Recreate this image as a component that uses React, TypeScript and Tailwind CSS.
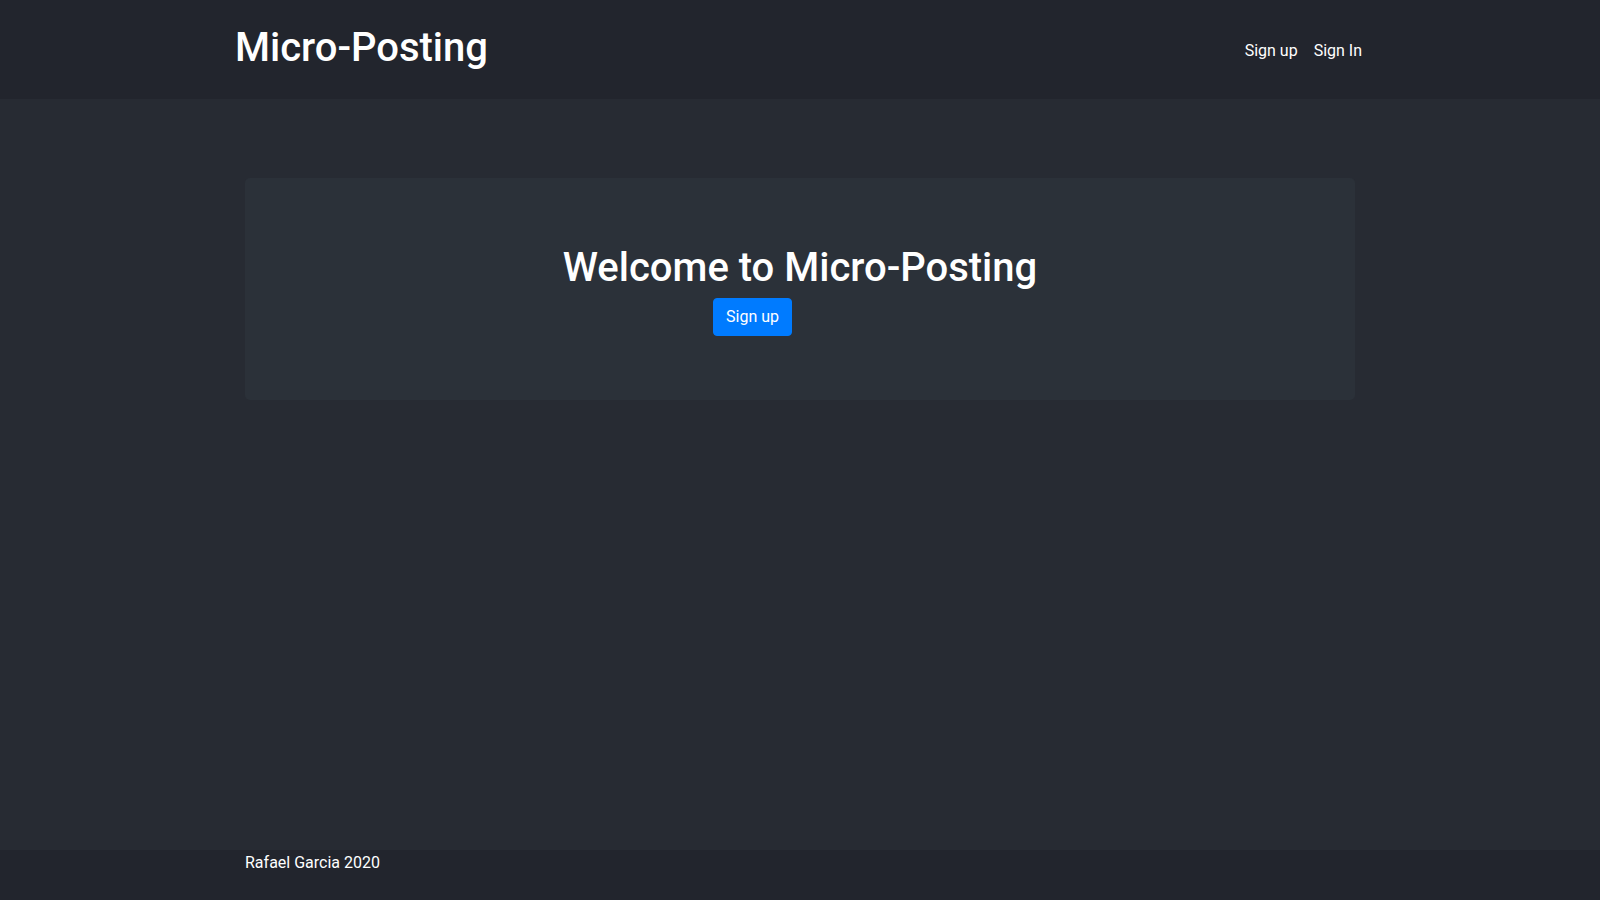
import React from "react";

export default function App() {
  return (
    <div
      className="min-h-screen flex flex-col bg-[#272b33] text-white"
      style={{ fontFamily: "Roboto, 'Liberation Sans', sans-serif" }}
    >
      <header className="bg-[#22252d] h-[99px]">
        <div className="w-[1140px] mx-auto h-full flex items-center justify-between">
          <a className="text-[40px] leading-[1.2] font-medium pl-[5px] -mt-[4px]">Micro-Posting</a>
          <nav className="flex items-center mt-[3px]">
            <a className="px-2 text-base leading-6">Sign up</a>
            <a className="px-2 text-base leading-6">Sign In</a>
          </nav>
        </div>
      </header>
      <main className="flex-1">
        <div className="w-[1110px] mx-auto mt-[79px] bg-[#2b3139] rounded-[5px] px-8 pt-[66px] pb-[64px]">
          <h1 className="text-center text-[40px] leading-[1.2] font-medium">Welcome to Micro-Posting</h1>
          <div className="flex">
            <button className="ml-[436px] mt-[6px] bg-[#007bff] border border-[#007bff] rounded-[4px] px-3 py-[6px] text-base leading-6 text-white">
              Sign up
            </button>
          </div>
        </div>
      </main>
      <footer className="bg-[#22252d] h-[50px]">
        <div className="w-[1110px] mx-auto text-base leading-6 pt-[1px]">Rafael Garcia 2020</div>
      </footer>
    </div>
  );
}
